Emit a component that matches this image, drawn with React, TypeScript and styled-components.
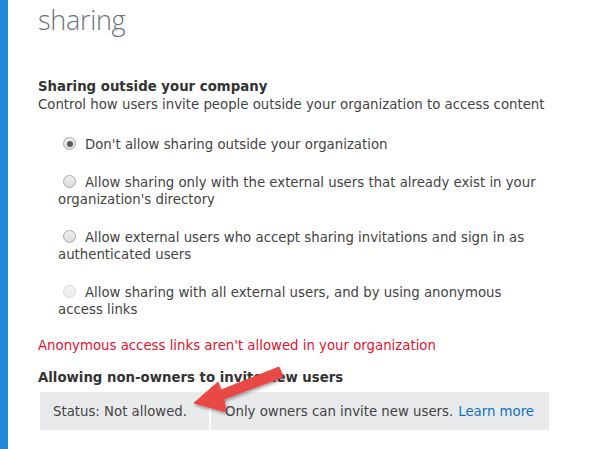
import React from 'react';
import styled, { createGlobalStyle } from 'styled-components';

const GlobalStyle = createGlobalStyle`
  html, body {
    margin: 0;
    padding: 0;
    background: #ffffff;
  }
  body {
    font-family: Verdana, "DejaVu Sans", sans-serif;
  }
`;

const Page = styled.div`
  display: flex;
  min-height: 449px;
  width: 591px;
  overflow: hidden;
`;

const SideBar = styled.div`
  width: 8px;
  flex: none;
  background: #2488d8;
`;

const Content = styled.div`
  position: relative;
  flex: 1;
  padding-left: 30px;
  font-size: 13.3px;
  line-height: 17px;
  color: #444444;
`;

const Title = styled.h1`
  margin: 0;
  padding-top: 2px;
  font-family: "Open Sans", "Noto Sans", sans-serif;
  font-weight: 300;
  font-size: 27px;
  line-height: 36px;
  color: #6a747c;
  letter-spacing: -0.3px;
`;

const SectionHeading = styled.div<{ $top: number }>`
  margin-top: ${(p) => p.$top}px;
  font-weight: bold;
  color: #333333;
`;

const Description = styled.div`
  margin-top: 1px;
  color: #444444;
`;

const Options = styled.div`
  margin-top: 23px;
  padding-left: 20px;
  width: 492px;
  display: flex;
  flex-direction: column;
  gap: 21px;
`;

const Option = styled.label`
  display: block;
  color: #444444;
`;

const Radio = styled.span<{ $checked?: boolean; $disabled?: boolean }>`
  display: inline-block;
  box-sizing: border-box;
  width: 13px;
  height: 13px;
  margin: 0 9px 0 5px;
  vertical-align: -1px;
  border-radius: 50%;
  border: 1px solid ${(p) => (p.$disabled ? '#d6d6d6' : '#a9a9a9')};
  background: ${(p) =>
    p.$disabled
      ? 'linear-gradient(#f4f4f4, #ececec)'
      : 'linear-gradient(#f0f0f0, #dcdcdc)'};
  position: relative;

  &::after {
    content: '';
    display: ${(p) => (p.$checked ? 'block' : 'none')};
    position: absolute;
    left: 2.5px;
    top: 2.5px;
    width: 6px;
    height: 6px;
    border-radius: 50%;
    background: #5a5a5a;
  }
`;

const Warning = styled.div`
  margin-top: 19px;
  color: #e8112d;
`;

const StatusBox = styled.div`
  margin-top: 6px;
  margin-left: 2px;
  width: 509px;
  display: flex;
  gap: 2px;
  height: 38px;
`;

const StatusCell = styled.div<{ $width?: number }>`
  background: #e9eaec;
  display: flex;
  align-items: center;
  padding-left: ${(p) => (p.$width ? 13 : 14)}px;
  ${(p) => (p.$width ? `width: ${p.$width}px; flex: none; box-sizing: border-box;` : 'flex: 1;')}
  color: #444444;
`;

const Link = styled.a`
  color: #0f72c4;
  text-decoration: none;
  margin-left: 5px;
`;

const ArrowOverlay = styled.svg`
  position: absolute;
  left: -8px;
  top: 0;
  pointer-events: none;
  overflow: visible;
`;

const options = [
  { text: "Don't allow sharing outside your organization", checked: true },
  { text: "Allow sharing only with the external users that already exist in your organization's directory" },
  { text: 'Allow external users who accept sharing invitations and sign in as authenticated users' },
  { text: 'Allow sharing with all external users, and by using anonymous access links', disabled: true },
];

export default function App() {
  return (
    <>
      <GlobalStyle />
      <Page>
        <SideBar />
        <Content>
          <Title>sharing</Title>
          <SectionHeading $top={40}>Sharing outside your company</SectionHeading>
          <Description>
            Control how users invite people outside your organization to access content
          </Description>
          <Options>
            {options.map((o) => (
              <Option key={o.text}>
                <Radio $checked={o.checked} $disabled={o.disabled} />
                {o.text}
              </Option>
            ))}
          </Options>
          <Warning>Anonymous access links aren't allowed in your organization</Warning>
          <SectionHeading $top={15}>Allowing non-owners to invite new users</SectionHeading>
          <StatusBox>
            <StatusCell $width={169}>Status: Not allowed.</StatusCell>
            <StatusCell>
              Only owners can invite new users.<Link href="#">Learn more</Link>
            </StatusCell>
          </StatusBox>
          <ArrowOverlay width="591" height="449">
            <defs>
              <filter id="shadow" x="-20%" y="-20%" width="140%" height="140%">
                <feDropShadow dx="1" dy="2" stdDeviation="1.5" floodColor="#000" floodOpacity="0.35" />
              </filter>
            </defs>
            <polygon
              points="194,403 218,382 221,390 279,367 283,377 224,399 226,412"
              fill="#e84a45"
              stroke="#e84a45"
              strokeWidth="1"
              strokeLinejoin="round"
              filter="url(#shadow)"
            />
          </ArrowOverlay>
        </Content>
      </Page>
    </>
  );
}
